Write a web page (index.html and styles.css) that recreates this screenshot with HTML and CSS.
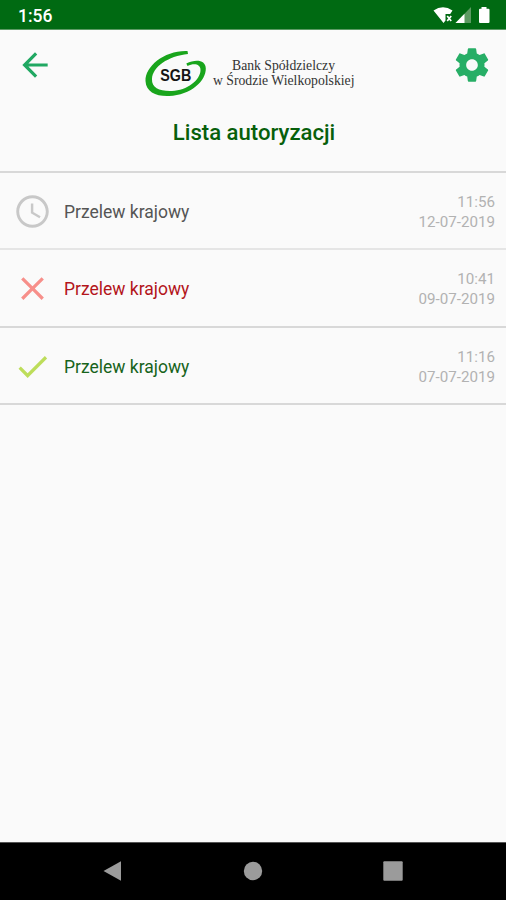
FILE: index.html
```html
<!DOCTYPE html>
<html lang="pl">
<head>
<meta charset="utf-8">
<title>Lista autoryzacji</title>
<link rel="stylesheet" href="styles.css">
</head>
<body>
<div class="status">
  <span class="clock">1:56</span>
  <svg class="status-icons" viewBox="432 4 60 22" aria-hidden="true">
    <path fill="#fff" d="M433.500 10.500Q443 4 452.500 10.500L450.200 14H445.500V20.500L443.500 23Z"/>
    <path fill="none" stroke="#fff" stroke-width="1.7" d="M447.200 16l4 5m0-5l-4 5"/>
    <path fill="#5c9a62" d="M471 7V23H455.500Z"/>
    <path fill="#fff" d="M464.500 13.700V23H455.500Z"/>
    <path fill="#fff" d="M481.500 7h5v1.700h2q1 0 1 1V22q0 1-1 1h-8.500q-1 0-1-1V9.700q0-1 1-1h1.500z"/>
  </svg>
</div>
<header class="header">
  <div class="toolbar">
    <svg class="back" viewBox="0 0 24 24"><path d="M20 11H7.830l5.590-5.590L12 4l-8 8 8 8 1.410-1.410L7.830 13H20v-2z"/></svg>
    <div class="brand">
      <svg class="logo" viewBox="144 48 64 50">
        <path fill="#19a51c" d="M187.500 51C165 50 145 66 145.500 81C146 92 156 96.500 169 96C191 95 206 81 205.800 68.500C205.500 60 196 59 186.300 63.500L187.500 66C194 63 200.500 64 200.500 70C200.500 80 187 90.500 172 91C160 91.500 151.500 88 152 79C152.500 67 168 56 188 54Z"/>
        <text x="160.300" y="80.500" textLength="31" lengthAdjust="spacingAndGlyphs">SGB</text>
      </svg>
      <svg class="bank-name" viewBox="211 56 146 34">
        <text x="232" y="70" textLength="103" lengthAdjust="spacingAndGlyphs">Bank Spółdzielczy</text>
        <text x="213" y="85" textLength="141.500" lengthAdjust="spacingAndGlyphs">w Środzie Wielkopolskiej</text>
      </svg>
    </div>
    <svg class="gear" viewBox="0 0 24 24"><path d="M19.430 12.980c.04-.32.07-.64.07-.98s-.03-.66-.07-.98l2.110-1.650c.19-.15.24-.42.12-.64l-2-3.460c-.12-.22-.39-.3-.61-.22l-2.490 1c-.52-.4-1.080-.73-1.690-.98l-.38-2.650C14.460 2.180 14.250 2 14 2h-4c-.25 0-.46.18-.49.42l-.38 2.650c-.61.25-1.170.59-1.690.98l-2.490-1c-.23-.09-.49 0-.61.22l-2 3.460c-.13.22-.07.49.12.64l2.110 1.650c-.04.32-.07.65-.07.98s.03.66.07.98l-2.110 1.650c-.19.15-.24.42-.12.64l2 3.460c.12.22.39.3.61.22l2.490-1c.52.4 1.080.73 1.690.98l.38 2.650c.03.24.24.42.49.42h4c.25 0 .46-.18.49-.42l.38-2.650c.61-.25 1.170-.59 1.690-.98l2.490 1c.23.09.49 0 .61-.22l2-3.460c.12-.22.07-.49-.12-.64l-2.110-1.650zM12 15.500c-1.930 0-3.500-1.570-3.500-3.500s1.570-3.500 3.500-3.500 3.500 1.570 3.500 3.500-1.570 3.500-3.500 3.500z"/></svg>
  </div>
  <h1 class="title">Lista autoryzacji</h1>
</header>
<main class="list">
  <div class="row pending">
    <svg class="icon" viewBox="0 0 24 24"><path d="M11.990 2C6.470 2 2 6.480 2 12s4.470 10 9.990 10C17.520 22 22 17.520 22 12S17.520 2 11.990 2zM12 20.200c-4.530 0-8.200-3.670-8.200-8.200S7.470 3.800 12 3.800s8.200 3.670 8.200 8.200-3.670 8.200-8.200 8.200zM12.500 7h-1.500v6l5.250 3.150.75-1.230-4.500-2.670z"/></svg>
    <span class="name">Przelew krajowy</span>
    <div class="when"><span>11:56</span><span>12-07-2019</span></div>
  </div>
  <div class="row rejected">
    <svg class="icon" viewBox="0 0 24 24"><path d="M19 6.410L17.590 5 12 10.590 6.410 5 5 6.410 10.590 12 5 17.590 6.410 19 12 13.410 17.590 19 19 17.590 13.410 12z"/></svg>
    <span class="name">Przelew krajowy</span>
    <div class="when"><span>10:41</span><span>09-07-2019</span></div>
  </div>
  <div class="row accepted">
    <svg class="icon" viewBox="0 0 24 24"><path d="M9 16.200L4.800 12l-1.400 1.400L9 19 21 7l-1.400-1.400L9 16.200z"/></svg>
    <span class="name">Przelew krajowy</span>
    <div class="when"><span>11:16</span><span>07-07-2019</span></div>
  </div>
</main>
<nav class="navbar">
  <svg viewBox="0 0 22 22"><path d="M1.500 11L19 1.200V20.800Z"/></svg>
  <svg viewBox="0 0 22 22"><circle cx="11" cy="11" r="9.200"/></svg>
  <svg viewBox="0 0 22 22"><rect x="1.300" y="1.300" width="19.400" height="19.400" rx="1"/></svg>
</nav>
</body>
</html>
```
FILE: styles.css
```css
* { box-sizing: border-box; }
body {
  margin: 0;
  height: 900px;
  display: flex;
  flex-direction: column;
  background: #fafafa;
  font-family: Roboto, "Liberation Sans", sans-serif;
  overflow: hidden;
}
svg { display: block; flex: none; }
.status {
  height: 30px;
  flex: none;
  display: flex;
  justify-content: space-between;
  padding: 4px 14px 0 18px;
  background: #006a12;
  border-bottom: 1px solid #5c9a64;
  color: #fff;
}
.clock { font-size: 17.500px; font-weight: 500; line-height: 25px; }
.status-icons { width: 60px; height: 22px; }
.header { height: 141px; flex: none; }
.toolbar {
  height: 70px;
  display: flex;
  align-items: center;
  justify-content: space-between;
  padding: 0 14px 0 16px;
}
.back { width: 38px; height: 38px; fill: #20a862; }
.gear { width: 40px; height: 40px; fill: #27ae66; }
.brand { display: flex; align-items: center; gap: 3px; margin: 16px 6px 0 0; }
.logo { width: 64px; height: 50px; }
.logo text { font: 700 16.300px "Liberation Sans", sans-serif; fill: #151515; }
.bank-name { width: 146px; height: 34px; }
.bank-name text { font: 14px "Liberation Serif", serif; fill: #333; }
.title {
  margin: 17px 0 0;
  padding-left: 2px;
  text-align: center;
  font-size: 22.150px;
  line-height: 30px;
  font-weight: 500;
  color: #075f0b;
}
.list { flex: 1; border-top: 2px solid #d8d8d8; }
.row {
  height: 77.300px;
  display: flex;
  align-items: center;
  padding: 2px 11px 0 13px;
  border-bottom: 2px solid #d8d8d8;
}
.icon { width: 39px; height: 39px; }
.name { margin: 1px auto 0 12px; font-size: 17.500px; }
.when {
  display: flex;
  flex-direction: column;
  align-items: flex-end;
  font-size: 15.150px;
  line-height: 20px;
  margin-top: 1px;
  color: #b2b2b2;
}
.pending { border-color: #e5e5e5; fill: #c8c8c8; color: #555; }
.rejected { fill: #f78f8a; color: #b3151b; }
.accepted { fill: #bddd5a; color: #17631b; }
.navbar {
  height: 58px;
  flex: none;
  display: flex;
  align-items: center;
  justify-content: space-between;
  padding: 0 102px 2px;
  background: #000;
  border-top: 1px solid #555;
  fill: #9b9b9b;
}
.navbar svg { width: 22px; height: 22px; }
```
